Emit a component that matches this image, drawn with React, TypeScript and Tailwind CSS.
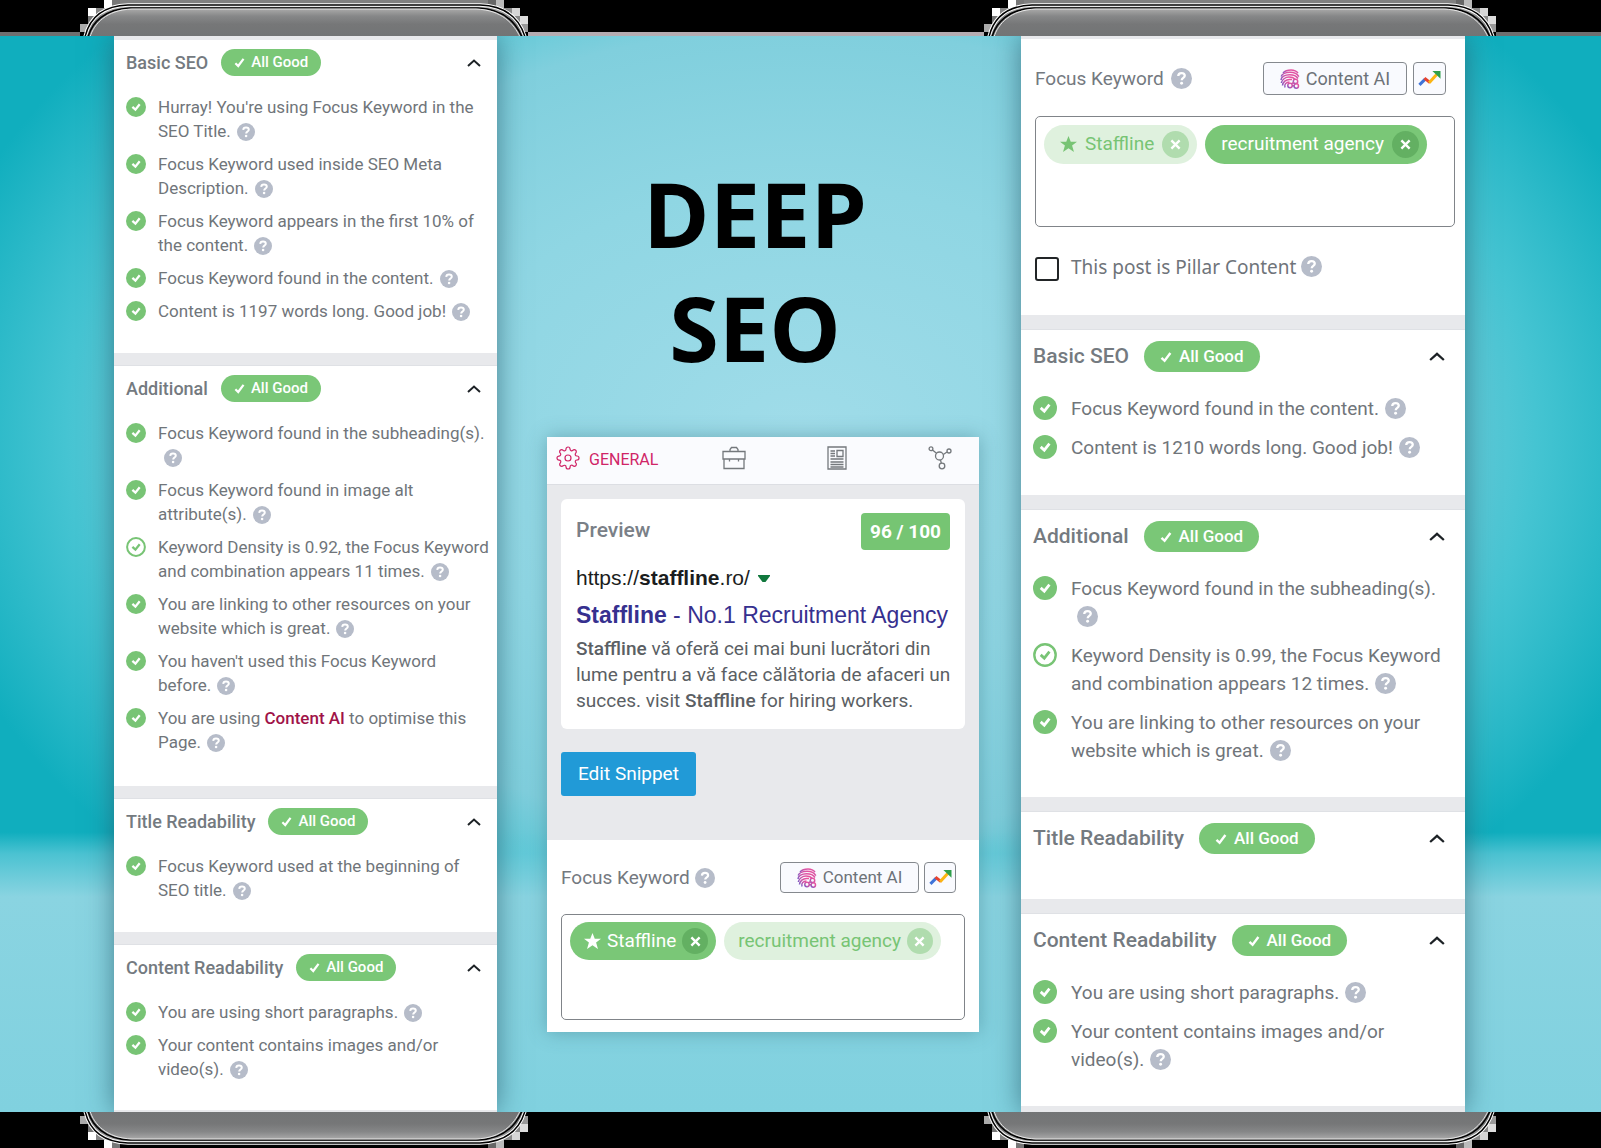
import { FiSettings } from "react-icons/fi";
import type { ReactNode } from "react";

type Size = "sm" | "lg";

type CheckItem = { lines: ReactNode[]; outline?: boolean };
type SectionData = { title: string; items: CheckItem[]; pad: string };

const leftSections: SectionData[] = [
  {
    title: "Basic SEO",
    pad: "pb-[30px]",
    items: [
      { lines: ["Hurray! You're using Focus Keyword in the", "SEO Title."] },
      { lines: ["Focus Keyword used inside SEO Meta", "Description."] },
      { lines: ["Focus Keyword appears in the first 10% of", "the content."] },
      { lines: ["Focus Keyword found in the content."] },
      { lines: ["Content is 1197 words long. Good job!"] },
    ],
  },
  {
    title: "Additional",
    pad: "pb-8",
    items: [
      { lines: ["Focus Keyword found in the subheading(s).", ""] },
      { lines: ["Focus Keyword found in image alt", "attribute(s)."] },
      {
        lines: ["Keyword Density is 0.92, the Focus Keyword", "and combination appears 11 times."],
        outline: true,
      },
      { lines: ["You are linking to other resources on your", "website which is great."] },
      { lines: ["You haven't used this Focus Keyword", "before."] },
      {
        lines: [
          <>
            You are using{" "}
            <a href="#content-ai" className="font-medium text-[#a01348]">
              Content AI
            </a>{" "}
            to optimise this
          </>,
          "Page.",
        ],
      },
    ],
  },
  {
    title: "Title Readability",
    pad: "pb-[30px]",
    items: [{ lines: ["Focus Keyword used at the beginning of", "SEO title."] }],
  },
  {
    title: "Content Readability",
    pad: "pb-[29px]",
    items: [
      { lines: ["You are using short paragraphs."] },
      { lines: ["Your content contains images and/or", "video(s)."] },
    ],
  },
];

const rightSections: SectionData[] = [
  {
    title: "Basic SEO",
    pad: "pb-[33px]",
    items: [
      { lines: ["Focus Keyword found in the content."] },
      { lines: ["Content is 1210 words long. Good job!"] },
    ],
  },
  {
    title: "Additional",
    pad: "pb-8",
    items: [
      { lines: ["Focus Keyword found in the subheading(s).", ""] },
      {
        lines: ["Keyword Density is 0.99, the Focus Keyword", "and combination appears 12 times."],
        outline: true,
      },
      { lines: ["You are linking to other resources on your", "website which is great."] },
    ],
  },
  { title: "Title Readability", pad: "pb-[22px]", items: [] },
  {
    title: "Content Readability",
    pad: "pb-8",
    items: [
      { lines: ["You are using short paragraphs."] },
      { lines: ["Your content contains images and/or", "video(s)."] },
    ],
  },
];

const sizes = {
  sm: {
    section: "px-3 pt-[9px]",
    header: "gap-[13px]",
    title: "text-lg leading-[27px]",
    pill: "h-[27px] gap-1.5 px-[13px] text-[15px]",
    pillCheck: "size-[11px]",
    chevron: "w-[14px] mr-1",
    list: "mt-[19px] gap-[9px]",
    item: "gap-3 text-[17px] leading-6",
    icon: "mt-0.5 size-5",
    help: "size-[18px]",
    gap: "h-[13px]",
  },
  lg: {
    section: "px-3 pt-[11px]",
    header: "gap-[15px]",
    title: "text-[21px] leading-[31px]",
    pill: "h-[31px] gap-[7px] px-4 text-[17px]",
    pillCheck: "size-3",
    chevron: "w-4 mr-2",
    list: "mt-[23px] gap-[11px]",
    item: "gap-[14px] text-[19px] leading-7",
    icon: "mt-px size-6",
    help: "size-[21px]",
    gap: "h-[15px]",
  },
};

function Tick({ className }: { className: string }) {
  return (
    <svg viewBox="0 0 12 12" className={className} fill="none" stroke="#fff" strokeWidth="2.400" aria-hidden="true">
      <path d="M1.500 6.800 4.600 9.800 10.400 2" />
    </svg>
  );
}

function StatusIcon({ outline, className }: { outline?: boolean; className: string }) {
  return (
    <svg viewBox="0 0 20 20" className={`shrink-0 ${className}`} aria-hidden="true">
      {outline ? (
        <circle cx="10" cy="10" r="8.900" fill="#fff" stroke="#78c475" strokeWidth="2" />
      ) : (
        <circle cx="10" cy="10" r="10" fill="#78c475" />
      )}
      <path d="M6.400 9.900 9.400 12.600 13.700 7.200" fill="none" stroke={outline ? "#78c475" : "#fff"} strokeWidth="2.300" />
    </svg>
  );
}

function Help({ className }: { className: string }) {
  return (
    <svg viewBox="0 0 20 20" className={`inline-block ${className}`} role="img" aria-label="Help">
      <circle cx="10" cy="10" r="10" fill="#b6bcc9" />
      <path
        d="M6.900 7.600C7 5.800 8.300 4.900 10 4.900c1.800 0 3.100 1 3.100 2.500 0 2-2.900 2.100-2.900 4.200"
        fill="none"
        stroke="#fff"
        strokeWidth="2.200"
      />
      <circle cx="10.100" cy="14.500" r="1.400" fill="#fff" />
    </svg>
  );
}

function Section({ data, size }: { data: SectionData; size: Size }) {
  const s = sizes[size];
  return (
    <>
      <section className={`bg-white ${s.section} ${data.pad}`}>
        <header className={`flex items-center ${s.header}`}>
          <h2 className={`whitespace-nowrap font-medium text-[#747a80] ${s.title}`}>{data.title}</h2>
          <span className={`flex items-center whitespace-nowrap rounded-full bg-[#7ac777] font-medium text-white ${s.pill}`}>
            <Tick className={s.pillCheck} />
            All Good
          </span>
          <button type="button" aria-label={`Collapse ${data.title}`} className={`ml-auto ${s.chevron}`}>
            <svg viewBox="0 0 14 8" fill="none" stroke="#1d2226" strokeWidth="2" className="w-full" aria-hidden="true">
              <path d="M1 7 7 1.600 13 7" />
            </svg>
          </button>
        </header>
        <ul className={`flex flex-col ${s.list}`}>
          {data.items.map((item, i) => (
            <li key={i} className={`flex items-start text-[#70757a] ${s.item}`}>
              <StatusIcon outline={item.outline} className={s.icon} />
              <p className="whitespace-nowrap">
                {item.lines.map((line, j) => (
                  <span key={j} className="block">
                    {line}
                    {j === item.lines.length - 1 && <Help className={`ml-1.5 align-[-4px] ${s.help}`} />}
                  </span>
                ))}
              </p>
            </li>
          ))}
        </ul>
      </section>
      <div className={`border-b border-[#dfe1e5] bg-[#e8e9ec] last:grow last:border-0 ${s.gap} last:h-auto`} />
    </>
  );
}

function BrainIcon({ className }: { className: string }) {
  return (
    <svg viewBox="0 0 20 20" className={className} fill="none" strokeWidth="1.500" aria-hidden="true">
      <defs>
        <linearGradient id="brain" x1="1" y1="0" x2="0" y2="1">
          <stop offset="0" stopColor="#f0529c" />
          <stop offset="0.500" stopColor="#cf55a8" />
          <stop offset="1" stopColor="#7a5bc4" />
        </linearGradient>
      </defs>
      <g stroke="url(#brain)">
        <path d="M3 4C5 1.800 8 1 11 1s5.500 1 7 3.200" />
        <path d="M1.200 7.500C2 5 6 3.300 10 3.300c4 0 7.500 1.700 8.800 4.400" />
        <path d="M1 11C1 8 5 5.700 9.500 5.700c4 0 7 1.300 8.500 3.800" />
        <path d="M1.300 14C1.800 10.500 5.500 8.100 9 8.100c2.500 0 4.500.500 6 2" />
        <path d="M2.500 16.500C2.800 13 6 10.500 9.500 10.500h2.500" />
        <path d="M5 18.500c-1-3 1-5.500 4.500-5.600" />
        <circle cx="15.500" cy="12.400" r="2.200" />
        <circle cx="10" cy="16.500" r="2.200" />
        <circle cx="16.300" cy="17" r="2.200" />
        <path d="M12.200 16.700h1.900M11.500 14.800l2.200-1.400" />
      </g>
    </svg>
  );
}

function TrendIcon({ className }: { className: string }) {
  return (
    <svg viewBox="0 0 24 18" className={className} fill="none" strokeWidth="3.200" aria-hidden="true">
      <path d="M1.500 15.500 7.500 9.500" stroke="#3f73d8" />
      <path d="M6.700 8.500 12.600 13.200" stroke="#e8432e" />
      <path d="M11.600 13.300 19.500 4.600" stroke="#fbb514" />
      <path d="M15 1h8.500v8z" fill="#2f9f4b" />
    </svg>
  );
}

const keywordSizes = {
  sm: {
    label: "text-[19px] leading-[31px]",
    help: "size-5 align-[-4px]",
    tool: "h-[31px]",
    ai: "w-[139px] text-[17px]",
    trend: "w-8",
    tools: "gap-[5px] mr-[9px]",
    box: "mt-[21px] h-[106px] gap-2 px-2 pt-[7px]",
    chip: "h-[38px] gap-1.5 pl-[14px]",
    close: "size-[26px]",
  },
  lg: {
    label: "text-[19px] leading-[33px]",
    help: "ml-0.5 size-[21px] align-[-4px]",
    tool: "h-[33px]",
    ai: "w-[144px] text-lg",
    trend: "w-[33px]",
    tools: "gap-1.5 mr-[9px]",
    box: "mt-[21px] h-[111px] gap-2 px-2 pt-2",
    chip: "h-[39px] gap-2 pl-4",
    close: "size-[27px]",
  },
};

function Chip({ text, star, strong, size }: { text: string; star?: boolean; strong?: boolean; size: Size }) {
  const s = keywordSizes[size];
  return (
    <span
      className={`flex items-center whitespace-nowrap rounded-full pr-2 text-[19px] ${s.chip} ${
        strong ? "bg-[#7ac777] text-white" : "bg-[#dff1de] text-[#77c474]"
      }`}
    >
      {star && (
        <svg viewBox="0 0 18 17" className="w-[17px]" fill="currentColor" aria-hidden="true">
          <path d="m9 0 2.400 6H18l-5.200 4.100L14.800 17 9 13l-5.800 4 2-6.900L0 6h6.600z" />
        </svg>
      )}
      {text}
      <button
        type="button"
        aria-label={`Remove ${text}`}
        className={`flex items-center justify-center rounded-full text-white ${s.close} ${
          strong ? "bg-[#63b062]" : "bg-[#b0dcae]"
        }`}
      >
        <svg viewBox="0 0 12 12" className="size-[11px]" stroke="currentColor" strokeWidth="2.600" aria-hidden="true">
          <path d="m1.500 1.500 9 9m0-9-9 9" />
        </svg>
      </button>
    </span>
  );
}

function FocusKeyword({ size, strong }: { size: Size; strong: "Staffline" | "recruitment agency" }) {
  const s = keywordSizes[size];
  const tool = "flex items-center justify-center rounded border border-[#85898e] bg-[#f9fafe]";
  const id = `keyword-${size}`;
  return (
    <>
      <div className="flex items-center justify-between">
        <label htmlFor={id} className={`whitespace-nowrap text-[#74797f] ${s.label}`}>
          Focus Keyword <Help className={s.help} />
        </label>
        <div className={`flex ${s.tools}`}>
          <button type="button" className={`${tool} gap-1.5 whitespace-nowrap text-[#6d7278] ${s.tool} ${s.ai}`}>
            <BrainIcon className="size-5" />
            Content AI
          </button>
          <button type="button" aria-label="Trends" className={`${tool} ${s.tool} ${s.trend}`}>
            <TrendIcon className="w-[23px]" />
          </button>
        </div>
      </div>
      <div className={`flex items-start rounded-[5px] border border-[#808489] bg-white ${s.box}`}>
        <Chip text="Staffline" star strong={strong === "Staffline"} size={size} />
        <Chip text="recruitment agency" strong={strong === "recruitment agency"} size={size} />
        <input id={id} type="text" className="w-0 min-w-0 grow bg-transparent outline-none" />
      </div>
    </>
  );
}

function GeneralCard() {
  return (
    <div className="flex flex-col bg-white shadow-[0_0_18px_rgba(50,110,125,0.450)]">
      <nav className="flex h-12 items-center justify-between border-b border-[#dcdee3] bg-[#fafbfe] pr-[27px] pb-1.5 pl-[9px] text-[#74787c]">
        <button type="button" className="mr-[-18px] flex items-center gap-[9px] text-base text-[#d02567]">
          <FiSettings className="size-6" strokeWidth={1.200} aria-hidden="true" />
          <span className="pt-1">GENERAL</span>
        </button>
        <button type="button" aria-label="Advanced">
          <svg viewBox="0 0 24 24" className="size-6" fill="none" stroke="currentColor" strokeWidth="1.300" aria-hidden="true">
            <path d="M1 5.500h22v7.500h-22zM2 13v9.500h20V13M8 5.500V3.500L9.500 1.500h5L16 3.500v2M7.500 13v2.500M16.500 13v2.500" />
          </svg>
        </button>
        <button type="button" aria-label="Schema">
          <svg viewBox="0 0 20 24" className="h-6 w-5" fill="none" stroke="currentColor" strokeWidth="1.300" aria-hidden="true">
            <path d="M1 1h18v22H1zM10 4.500h6v6h-6zM3.500 5h4.500M3.500 7.500h4.500M3.500 10h4.500M3.500 13h13M3.500 16h13M3.500 18.500h13M3.500 21h13" />
          </svg>
        </button>
        <button type="button" aria-label="Social">
          <svg viewBox="0 0 24 24" className="size-6" fill="none" stroke="currentColor" strokeWidth="1.300" aria-hidden="true">
            <circle cx="11.500" cy="10" r="4" />
            <circle cx="3" cy="2.800" r="1.900" />
            <circle cx="21" cy="5" r="2" />
            <circle cx="14" cy="20" r="2.800" />
            <path d="m4.500 4 4 3.300M15.300 8.500 19 6M12.500 14l.800 3.200" />
          </svg>
        </button>
      </nav>
      <div className="bg-[#e8e9ec] px-[14px] pt-[14px] pb-11">
        <section className="rounded-md bg-white px-[15px] pt-[14px] pb-[15px]">
          <header className="flex items-start justify-between">
            <h2 className="pt-px text-[21px] leading-8 font-medium text-[#7a8087]">Preview</h2>
            <span className="rounded bg-[#76c573] px-[9px] text-[19px] leading-[37px] font-bold whitespace-nowrap text-white">96 / 100</span>
          </header>
          <div className="mt-4 flex items-center gap-2 font-['Liberation_Sans',sans-serif] text-[21px] leading-6 text-[#1b1d20]">
            <a href="https://staffline.ro/">
              https://<b>staffline</b>.ro/
            </a>
            <svg viewBox="0 0 12 7" className="w-3" fill="#11783d" aria-hidden="true">
              <path d="M0 0h12v1L7.500 7h-3L0 1z" />
            </svg>
          </div>
          <h3 className="mt-[11px] font-['Liberation_Sans',sans-serif] text-[23px] leading-7 whitespace-nowrap text-[#36308f]">
            <b>Staffline</b> - No.1 Recruitment Agency
          </h3>
          <p className="mt-[7px] text-[19px] leading-[26px] whitespace-nowrap text-[#5b5f64]">
            <b className="font-medium">Staffline</b> vă oferă cei mai buni lucrători din
            <br />
            lume pentru a vă face călătoria de afaceri un
            <br />
            succes. visit <b className="font-medium">Staffline</b> for hiring workers.
          </p>
        </section>
        <button type="button" className="mt-[23px] h-11 rounded-[3px] bg-[#219ad7] px-[17px] text-[19px] whitespace-nowrap text-white">
          Edit Snippet
        </button>
      </div>
      <section className="px-[14px] pt-[22px] pb-3">
        <FocusKeyword size="sm" strong="Staffline" />
      </section>
    </div>
  );
}

/* Metallic phone edge with its stepped, pixelated corners. */
function PhoneEdge({ id, width, flip }: { id: string; width: number; flip?: boolean }) {
  const w = width;
  const body = `M5 37C9 20 20 6 48 5H${w - 48}C${w - 20} 6 ${w - 8} 20 ${w - 3} 37`;
  const blocks: [number, number, string][] = [
    [24, 0, "#fff"],
    [32, 0, "#777"],
    [8, 8, "#fff"],
    [16, 8, "#858585"],
    [24, 8, "#999"],
    [8, 16, "#777"],
    [0, 24, "#aaa"],
    [w - 32, 0, "#bbb"],
    [w - 40, 0, "#666"],
    [w - 16, 8, "#d5d5d5"],
    [w - 24, 8, "#8a8a8a"],
    [w - 32, 8, "#777"],
    [w - 8, 16, "#ddd"],
    [w - 16, 16, "#888"],
    [w - 8, 24, "#999"],
  ];
  return (
    <svg
      viewBox={`0 0 ${w} 36`}
      preserveAspectRatio="none"
      className={`h-9 w-full ${flip ? "-scale-y-100" : ""}`}
      fill="none"
      aria-hidden="true"
    >
      <defs>
        <linearGradient id={id} x1="0" y1="0" x2="0" y2="1">
          <stop offset="0.150" stopColor="#a5a5a5" />
          <stop offset="0.350" stopColor="#868788" />
          <stop offset="0.600" stopColor="#767778" />
          <stop offset="1" stopColor="#727475" />
        </linearGradient>
      </defs>
      {!flip && <path d={`M40 0H${w - 40}V8H40z`} fill="#808080" />}
      {blocks.map(([x, y, fill]) => (
        <path key={`${x}-${y}`} d={`M${x} ${y}h8v8h-8z`} fill={fill} />
      ))}
      <path d={body} fill={`url(#${id})`} stroke="#fff" strokeWidth="3.500" />
      <path d={body} stroke="#000" strokeWidth="1.500" />
      <path
        d={`M8 37C12 23 24 9 50 8H${w - 50}C${w - 24} 9 ${w - 12} 23 ${w - 6} 37`}
        stroke="#000"
        strokeWidth="1.500"
      />
      <path
        d={`M10 37C14 24 26 10 52 9H${w - 52}C${w - 26} 10 ${w - 14} 24 ${w - 8} 37`}
        stroke="#e6e6e6"
        strokeWidth="1"
      />
    </svg>
  );
}

function EdgeBar({ flip }: { flip?: boolean }) {
  const line = flip ? "" : "border-b-4";
  return (
    <div className="grid h-9 shrink-0 grid-cols-[80fr_448fr_456fr_512fr_105fr] bg-black">
      <div className={`border-[#6f6f70] ${line}`} />
      <PhoneEdge id={flip ? "edge-bl" : "edge-tl"} width={448} flip={flip} />
      <div className={`border-[#b5acb1] ${line}`} />
      <PhoneEdge id={flip ? "edge-br" : "edge-tr"} width={512} flip={flip} />
      <div className={`border-[#6f6f70] ${line}`} />
    </div>
  );
}

export default function App() {
  const panel = "flex min-w-0 flex-col bg-[#e8e9ec] shadow-[0_0_26px_rgba(35,85,100,0.650)]";
  return (
    <div className="flex min-h-screen flex-col overflow-hidden bg-black font-[Roboto,sans-serif]">
      <EdgeBar />
      <main className="grid grow grid-cols-[114fr_383fr_50fr_432fr_42fr_444fr_136fr] overflow-hidden bg-[linear-gradient(180deg,transparent_74%,rgba(100,203,218,0.700)_76%,#8ad4e1_80%,#80d1df_100%),radial-gradient(ellipse_56%_58%_at_50%_37%,#a0dce9_0%,#8fd6e3_40%,#80cfdd_65%,#45c4d2_82%,#10aebe_100%)]">
        <div className={`col-start-2 pt-1 ${panel}`}>
          {leftSections.map((section) => (
            <Section key={section.title} data={section} size="sm" />
          ))}
        </div>
        <div className="col-start-4 min-w-0 pt-[120px]">
          <h1 className="pr-4 text-center font-['Open_Sans',sans-serif] text-[90px] leading-[114px] font-bold text-black">
            DEEP
            <br />
            SEO
          </h1>
          <div className="mt-[53px]">
            <GeneralCard />
          </div>
        </div>
        <div className={`col-start-6 pt-[3px] ${panel}`}>
          <section className="bg-white px-[14px] pt-[23px] pb-[34px]">
            <div className="mr-[-4px]">
              <FocusKeyword size="lg" strong="recruitment agency" />
            </div>
            <div className="mt-[26px] flex items-center gap-3">
              <input
                id="pillar"
                type="checkbox"
                className="mt-1 size-6 appearance-none rounded-[3px] border-2 border-[#222527] bg-white checked:bg-[#222527]"
              />
              <label htmlFor="pillar" className="font-['Noto_Sans',sans-serif] text-[19px] leading-7 whitespace-nowrap text-[#6f747a]">
                This post is Pillar Content <Help className="size-[21px] align-[-3px]" />
              </label>
            </div>
          </section>
          <div className="h-[15px] border-b border-[#dfe1e5]" />
          {rightSections.map((section) => (
            <Section key={section.title} data={section} size="lg" />
          ))}
        </div>
      </main>
      <EdgeBar flip />
    </div>
  );
}
